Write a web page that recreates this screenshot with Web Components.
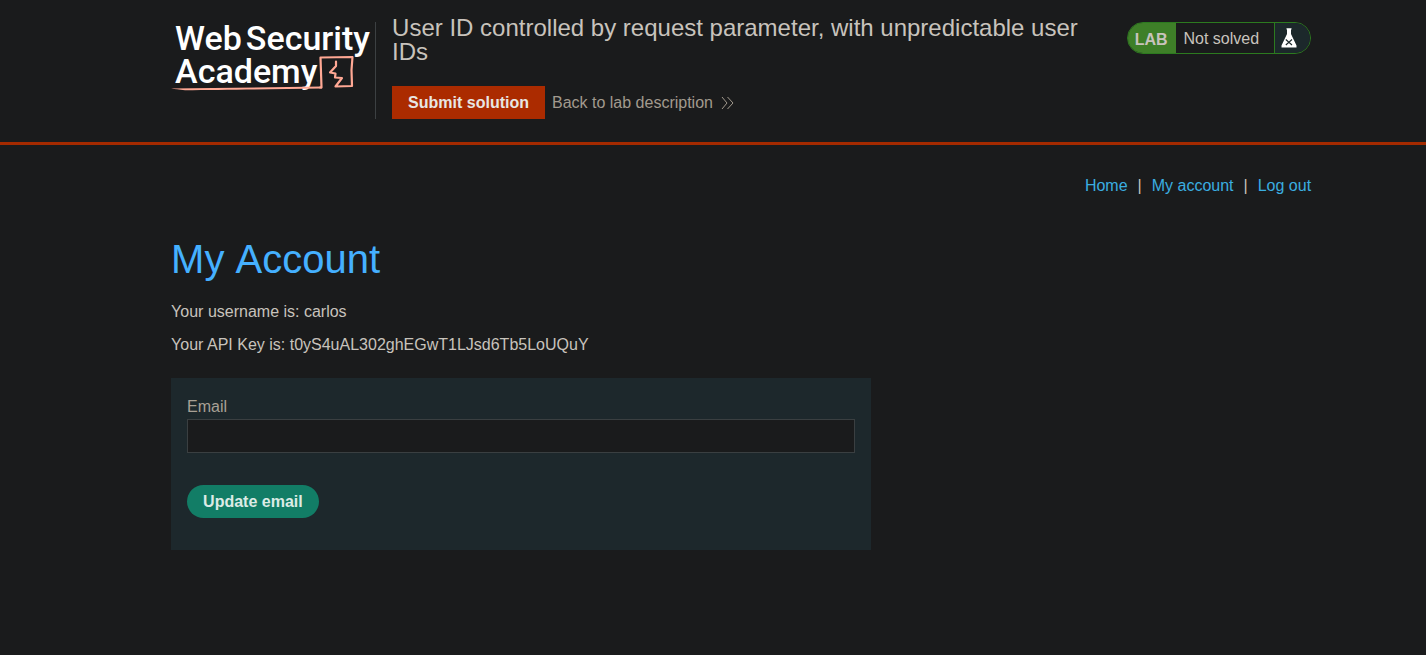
<!DOCTYPE html>
<html lang="en">
<head>
<meta charset="utf-8">
<title>User ID controlled by request parameter, with unpredictable user IDs</title>
<style>
body{margin:0;min-height:100vh;background:#1a1b1c;color:#c8c3bc;font:16px/20px "Liberation Sans",Arial,sans-serif}
</style>
</head>
<body>
<lab-header>
  <academy-logo slot="logo"></academy-logo>
  <span slot="title">User ID controlled by request parameter, with unpredictable user IDs</span>
  <lab-status slot="status">Not solved</lab-status>
</lab-header>
<account-page username="carlos" api-key="t0yS4uAL302ghEGwT1LJsd6Tb5LoUQuY">
  <site-nav slot="nav"></site-nav>
  <email-form slot="form"></email-form>
</account-page>
<script>
const define = (name, html, setup) => customElements.define(name, class extends HTMLElement {
  constructor() {
    super();
    this.attachShadow({mode: 'open'}).innerHTML = html;
  }
  connectedCallback() { if (setup) setup(this, this.shadowRoot); }
});

define('academy-logo', `
<style>
:host{display:block;width:200px}
a{display:block;position:relative;color:#fff;text-decoration:none;font:500 34px/33px Roboto,sans-serif;height:75px}
.row{display:flex;gap:4px;padding-left:4px;white-space:nowrap}
svg{position:absolute;left:0;top:0;overflow:visible}
</style>
<a href="#" aria-label="Web Security Academy">
  <svg width="200" height="75" viewBox="0 0 200 75" aria-hidden="true">
    <path d="M0 66.500C50 65.800 100 65.500 151 64.500V66.500C100 67.500 50 68 14 68.300C8 67.600 4 67 0 66.500Z" fill="#ffa894"/>
    <path d="M149 65.500H150.500L149.500 35.500L181.500 35L180.500 48L181 64L164.500 64.500L171 56L164 55.500L164.500 51.500L159 50.500L165 44V39.500" fill="none" stroke="#ffa894" stroke-width="2.200" stroke-linejoin="round" stroke-linecap="round"/>
  </svg>
  <div class="row"><span>Web</span><span>Security</span></div>
  <div class="row"><span>Academy</span></div>
</a>`);

define('lab-status', `
<style>
:host{display:block}
.pill{display:flex;box-sizing:border-box;height:32px;border:1px solid #2c7a1f;border-radius:16px;overflow:hidden;line-height:32px;white-space:nowrap}
.tag{background:#3e7f28;padding:1px 8px 0 7px;font-weight:700}
.state{padding:0 15px 0 8px}
.icon{display:flex;width:36px;box-sizing:border-box;padding:5px 0 0 6px;background:#1c282b;border-left:1px solid #2c7a1f}
</style>
<div class="pill">
  <span class="tag">LAB</span><span class="state"><slot></slot></span>
  <span class="icon"><svg width="16" height="20" viewBox="0 0 16 20" aria-hidden="true"><path d="M5.500 0.200H10.500V1.500H10V6L15.500 17.500V19.500H0.500V17.500L6 6V1.500H5.500Z" fill="#fff"/><path d="M4.800 11.500L11 17M11 11.500L4.800 17" stroke="#1c282b" stroke-width="1.100"/></svg></span>
</div>`);

define('lab-header', `
<style>
:host{display:block;border-bottom:3px solid #a42a00}
header{display:flex;align-items:flex-start;max-width:1140px;margin:0 8% 0 12%;padding:16px 0 23px}
.logo{padding:6px 4px 0 0}
.main{display:flex;flex:1;margin-right:16px;min-width:0}
.rule{width:1px;margin-top:6px;background:#3c4042}
.body{padding-left:16px;flex:1}
h2{margin:0 0 22px;font-size:24px;line-height:24px;font-weight:400}
.actions{display:flex;align-items:center;gap:7px}
button{height:33px;padding:0 16px;border:0;background:#ab2b00;color:#e8e6e3;font:700 16px/20px "Liberation Sans",Arial,sans-serif}
a{display:flex;align-items:center;gap:8px;color:#a29a8e;text-decoration:none}
.status{padding-top:6px}
</style>
<header>
  <div class="logo"><slot name="logo"></slot></div>
  <div class="main">
    <div class="rule"></div>
    <div class="body">
      <h2><slot name="title"></slot></h2>
      <div class="actions">
        <button type="button">Submit solution</button>
        <a href="#">Back to lab description <svg width="13" height="14" viewBox="0 0 13 14" fill="none" stroke="currentColor" aria-hidden="true"><path d="M1 1L6 7L1 13M6.500 1L12 7L6.500 13"/></svg></a>
      </div>
    </div>
  </div>
  <div class="status"><slot name="status"></slot></div>
</header>`);

define('site-nav', `
<style>
:host{display:block}
nav{display:flex;justify-content:flex-end;gap:10px}
a{color:#3aaee0;text-decoration:none}
</style>
<nav><a href="#">Home</a><span>|</span><a href="#">My account</a><span>|</span><a href="#">Log out</a></nav>`);

define('email-form', `
<style>
:host{display:block;max-width:700px}
form{background:#1d282c;padding:19px 16px 32px}
label{display:block;color:#a8a095;margin-bottom:2px}
input{display:block;box-sizing:border-box;width:100%;height:34px;padding:0 8px;margin:0 0 32px;border:1px solid #3a3f41;background:#1a1b1c;color:#e8e6e3;font:inherit}
button{height:33px;padding:0 16px;border:0;border-radius:17px;background:#127d66;color:#dcebe5;font:700 16px/20px "Liberation Sans",Arial,sans-serif}
</style>
<form>
  <label for="email">Email</label>
  <input id="email" type="email" name="email">
  <button type="submit">Update email</button>
</form>`);

define('account-page', `
<style>
:host{display:block}
main{max-width:1140px;margin:0 8% 0 12%;padding:31px 0 32px}
h1{margin:39px 0 19px;color:#45b0ff;font-size:40px;line-height:48px;font-weight:400;font-kerning:none}
p{margin:0 0 13px}
.form{padding-top:10px}
</style>
<main>
  <slot name="nav"></slot>
  <h1>My Account</h1>
  <p>Your username is: <span id="user"></span></p>
  <p>Your API Key is: <span id="key"></span></p>
  <div class="form"><slot name="form"></slot></div>
</main>`, (host, root) => {
  root.getElementById('user').textContent = host.getAttribute('username');
  root.getElementById('key').textContent = host.getAttribute('api-key');
});
</script>
</body>
</html>
